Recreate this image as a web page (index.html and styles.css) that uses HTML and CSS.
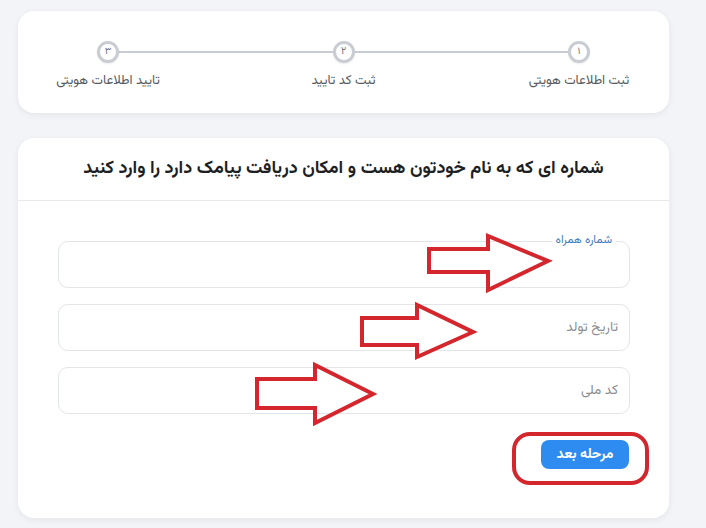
FILE: index.html
```html
<!DOCTYPE html>
<html lang="fa" dir="rtl">
<head>
<meta charset="utf-8">
<title>احراز هویت</title>
<link rel="stylesheet" href="styles.css">
</head>
<body>
<main class="page">
  <section class="card stepper-card">
    <div class="steps">
      <div class="dot">۱</div>
      <div class="line"></div>
      <div class="dot">۲</div>
      <div class="line"></div>
      <div class="dot">۳</div>
      <div class="label"><span>ثبت اطلاعات هویتی</span></div>
      <div></div>
      <div class="label"><span>ثبت کد تایید</span></div>
      <div></div>
      <div class="label"><span>تایید اطلاعات هویتی</span></div>
    </div>
  </section>

  <section class="card form-card">
    <header class="form-head">
      <h1 class="title">شماره ای که به نام خودتون هست و امکان دریافت پیامک دارد را وارد کنید</h1>
    </header>
    <div class="form-body">
      <div class="field">
        <span class="float-label">شماره همراه</span>
        <input class="input" type="text">
      </div>
      <div class="field">
        <input class="input" type="text" placeholder="تاریخ تولد">
      </div>
      <div class="field">
        <input class="input" type="text" placeholder="کد ملی">
      </div>
      <div class="actions">
        <button class="btn" type="button">مرحله بعد</button>
      </div>
    </div>
  </section>

  <svg class="marks" width="706" height="528" viewBox="0 0 706 528" aria-hidden="true">
    <g fill="none" stroke="#d4262d" stroke-width="4" stroke-linejoin="miter">
      <polygon points="429,249 488,249 488,236 548,261 488,290 488,272 429,272"/>
      <polygon points="362,318 417,318 417,305 473,332 417,357 417,345 362,345"/>
      <polygon points="257,379 315,379 315,365 373,394 315,423 315,408 257,408"/>
      <rect x="514" y="434" width="133" height="49" rx="16" ry="16"/>
    </g>
  </svg>
</main>
</body>
</html>
```

FILE: styles.css
```css
* { box-sizing: border-box; }

html, body {
  margin: 0;
  padding: 0;
}

body {
  background: #f3f4f7;
  font-family: "Vazirmatn", "Noto Sans Arabic", "DejaVu Sans", sans-serif;
  color: #222;
  width: 706px;
  height: 528px;
  overflow: hidden;
}

.page {
  position: relative;
  padding: 11px 37px 0 18px;
  display: flex;
  flex-direction: column;
  gap: 25px;
  height: 528px;
}

.card {
  background: #fff;
  border-radius: 16px;
  box-shadow: 0 2px 6px rgba(30, 40, 60, 0.07);
}

.stepper-card {
  height: 102px;
  padding: 30px 79px 0;
}

.steps {
  display: grid;
  grid-template-columns: 22px 1fr 22px 1fr 22px;
  grid-template-rows: 22px auto;
  align-items: center;
  row-gap: 8px;
}

.dot {
  width: 22px;
  height: 22px;
  border-radius: 50%;
  border: 3px solid #c9cdd3;
  background: #fff;
  display: flex;
  align-items: center;
  justify-content: center;
  font-size: 10px;
  color: #6f737a;
  line-height: 1;
  box-shadow: 0 1px 2px rgba(0,0,0,0.08);
}

.line {
  height: 2px;
  background: #c9ccd1;
}

.label {
  width: 22px;
  display: flex;
  justify-content: center;
  white-space: nowrap;
  font-size: 13px;
  color: #555a61;
}

.form-card {
  height: 380px;
  display: flex;
  flex-direction: column;
}

.form-head {
  height: 63px;
  display: flex;
  align-items: center;
  justify-content: center;
  border-bottom: 1px solid #e7e9ec;
}

.title {
  margin: 0;
  font-size: 18px;
  font-weight: 700;
  color: #1d1f23;
}

.form-body {
  padding: 40px 39px 0 40px;
  display: flex;
  flex-direction: column;
  gap: 16px;
}

.field {
  position: relative;
}

.input {
  display: block;
  width: 100%;
  height: 47px;
  border: 1px solid #e3e5e9;
  border-radius: 10px;
  background: #fff;
  padding: 0 11px;
  font-family: inherit;
  font-size: 13.5px;
  color: #333;
  outline: none;
}

.input::placeholder {
  color: #8a8d92;
}

.float-label {
  position: absolute;
  top: -8px;
  right: 14px;
  padding: 0 4px;
  background: #fff;
  font-size: 11.5px;
  line-height: 15px;
  color: #3f7cc2;
}

.actions {
  display: flex;
  justify-content: flex-start;
  margin-top: 10px;
}

.btn {
  width: 88px;
  height: 29px;
  border: 0;
  border-radius: 8px;
  background: #2e8bf0;
  color: #fff;
  font-family: inherit;
  font-size: 14px;
  font-weight: 700;
  margin-right: 1px;
}

.marks {
  position: absolute;
  top: 0;
  left: 0;
  pointer-events: none;
}
```
